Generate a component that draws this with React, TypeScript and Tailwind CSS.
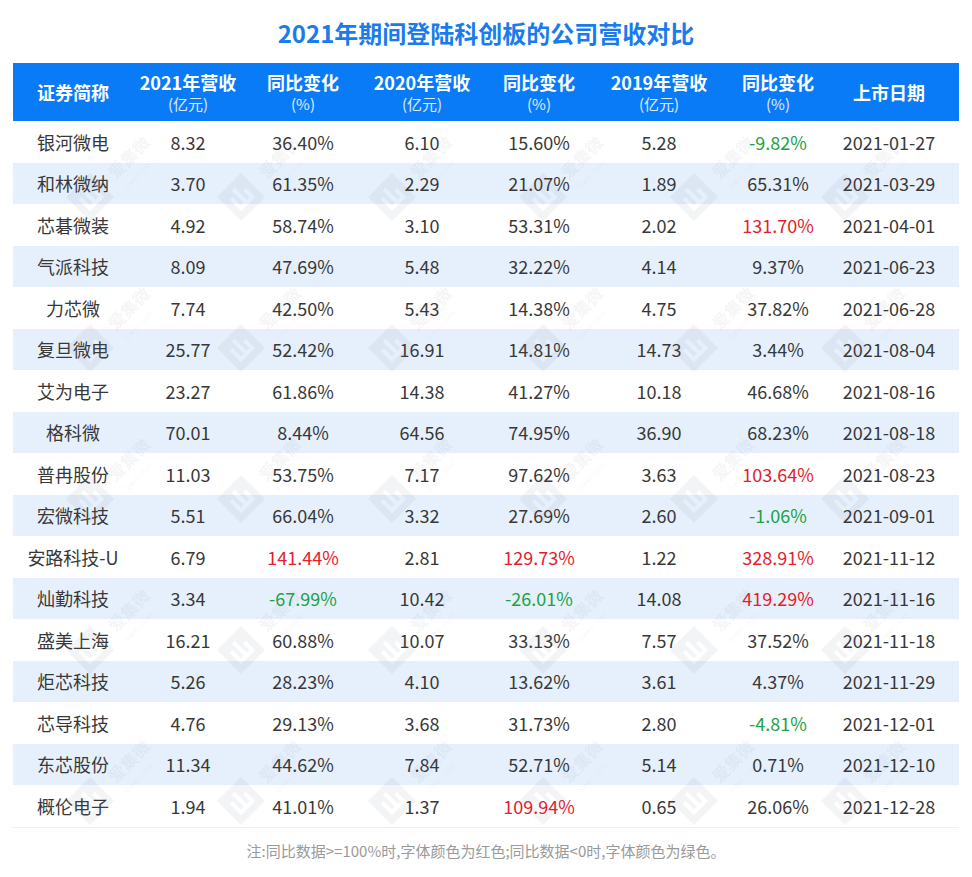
import React from "react";

type Row = [string, string, string, string, string, string, string, string];

const rows: Row[] = [
  ["银河微电", "8.32", "36.40%", "6.10", "15.60%", "5.28", "-9.82%", "2021-01-27"],
  ["和林微纳", "3.70", "61.35%", "2.29", "21.07%", "1.89", "65.31%", "2021-03-29"],
  ["芯碁微装", "4.92", "58.74%", "3.10", "53.31%", "2.02", "131.70%", "2021-04-01"],
  ["气派科技", "8.09", "47.69%", "5.48", "32.22%", "4.14", "9.37%", "2021-06-23"],
  ["力芯微", "7.74", "42.50%", "5.43", "14.38%", "4.75", "37.82%", "2021-06-28"],
  ["复旦微电", "25.77", "52.42%", "16.91", "14.81%", "14.73", "3.44%", "2021-08-04"],
  ["艾为电子", "23.27", "61.86%", "14.38", "41.27%", "10.18", "46.68%", "2021-08-16"],
  ["格科微", "70.01", "8.44%", "64.56", "74.95%", "36.90", "68.23%", "2021-08-18"],
  ["普冉股份", "11.03", "53.75%", "7.17", "97.62%", "3.63", "103.64%", "2021-08-23"],
  ["宏微科技", "5.51", "66.04%", "3.32", "27.69%", "2.60", "-1.06%", "2021-09-01"],
  ["安路科技-U", "6.79", "141.44%", "2.81", "129.73%", "1.22", "328.91%", "2021-11-12"],
  ["灿勤科技", "3.34", "-67.99%", "10.42", "-26.01%", "14.08", "419.29%", "2021-11-16"],
  ["盛美上海", "16.21", "60.88%", "10.07", "33.13%", "7.57", "37.52%", "2021-11-18"],
  ["炬芯科技", "5.26", "28.23%", "4.10", "13.62%", "3.61", "4.37%", "2021-11-29"],
  ["芯导科技", "4.76", "29.13%", "3.68", "31.73%", "2.80", "-4.81%", "2021-12-01"],
  ["东芯股份", "11.34", "44.62%", "7.84", "52.71%", "5.14", "0.71%", "2021-12-10"],
  ["概伦电子", "1.94", "41.01%", "1.37", "109.94%", "0.65", "26.06%", "2021-12-28"],
];

const heads: [string, string | null][] = [
  ["证券简称", null],
  ["2021年营收", "(亿元)"],
  ["同比变化", "(%)"],
  ["2020年营收", "(亿元)"],
  ["同比变化", "(%)"],
  ["2019年营收", "(亿元)"],
  ["同比变化", "(%)"],
  ["上市日期", null],
];

const grid = "grid grid-cols-[120px_110px_120px_118px_116px_124px_114px_124px]";

// >=100% red, <0 green
function tone(col: number, v: string) {
  if (col !== 2 && col !== 4 && col !== 6) return "text-[#383838]";
  const n = parseFloat(v);
  if (n >= 100) return "text-[#e3202b]";
  if (n < 0) return "text-[#21a244]";
  return "text-[#383838]";
}

const Mark = ({ x, y }: { x: number; y: number }) => (
  <g transform={`translate(${x} ${y}) rotate(-45)`} fill="#6f7c8c" fillOpacity={0.085}>
    <path
      fillRule="evenodd"
      d="M-17,-17 h34 v34 h-34 z M-10,-6 h4 v12 h-4 z M-2,-11 h4 v17 h-4 z M6,-3 h4 v9 h-4 z M-10,6 h20 v4 h-20 z"
    />
    <text x={30} y={6} fontSize={17} fontWeight={700}>
      爱集微
    </text>
    <text x={50} y={21} fontSize={8} textAnchor="middle">
      ijiwei.com
    </text>
  </g>
);

const Watermarks = () => {
  const marks: { x: number; y: number }[] = [];
  for (let i = 0; i < 6; i++)
    for (let j = 0; j < 5; j++) marks.push({ x: 90 + 151 * i, y: 197 + 151 * j });
  return (
    <svg
      className="absolute left-0 top-0 pointer-events-none"
      width={972}
      height={877}
      style={{ fontFamily: '"Noto Sans CJK SC", sans-serif' }}
    >
      {marks.map((m, k) => (
        <Mark key={k} x={m.x} y={m.y} />
      ))}
    </svg>
  );
};

export default function App() {
  return (
    <div
      className="relative w-[972px] h-[877px] bg-white overflow-hidden"
      style={{ fontFamily: '"Noto Sans CJK SC", "Noto Sans", sans-serif' }}
    >
      <div className="h-[63px] flex items-center justify-center pt-[3px]">
        <h1 className="text-[24px] font-bold text-[#1a7cec] leading-[30px]">
          2021年期间登陆科创板的公司营收对比
        </h1>
      </div>

      <div className="mx-[13px] w-[946px]">
        <div className={`${grid} h-[58px] bg-[#0a7bf6] text-white`}>
          {heads.map(([t, s], i) => (
            <div
              key={i}
              className={`flex flex-col items-center justify-center ${i === 7 ? "pr-4" : ""}`}
            >
              <div className="text-[18px] font-bold leading-[24px]">{t}</div>
              {s && <div className="text-[15px] leading-[20px] text-white/85">{s}</div>}
            </div>
          ))}
        </div>

        <div className="border-b border-[#edf1f5]">
          {rows.map((r, ri) => (
            <div
              key={ri}
              className={`${grid} h-[41.5px] ${ri % 2 === 1 ? "bg-[#e6f0fd]" : "bg-white"}`}
            >
              {r.map((v, ci) => (
                <div
                  key={ci}
                  className={`flex items-center justify-center text-[18px] leading-[24px] ${tone(ci, v)} ${
                    ci === 7 ? "pr-4" : ""
                  }`}
                >
                  {v}
                </div>
              ))}
            </div>
          ))}
        </div>
      </div>

      <div className="h-[47px] flex items-center justify-center text-[15px] leading-[20px] text-[#9a9a9a]">
        注:同比数据&gt;=100%时,字体颜色为红色;同比数据&lt;0时,字体颜色为绿色。
      </div>

      <Watermarks />
    </div>
  );
}
